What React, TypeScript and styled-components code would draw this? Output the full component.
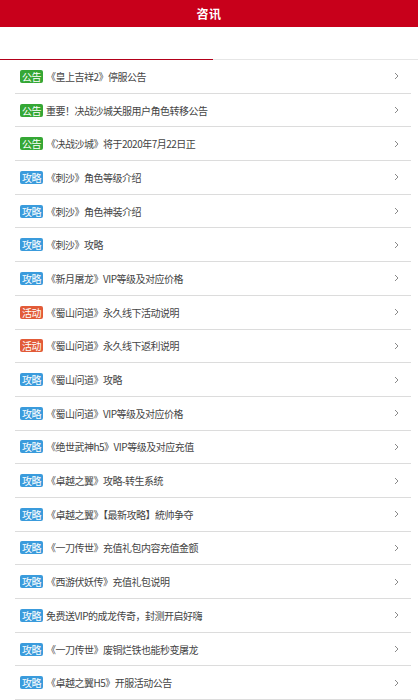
import React from 'react';
import styled, { createGlobalStyle } from 'styled-components';

const GlobalStyle = createGlobalStyle`
  html, body {
    margin: 0;
    padding: 0;
    background: #fff;
  }
  body {
    font-family: "Noto Sans CJK SC", "Liberation Sans", sans-serif;
  }
`;

type Kind = 'notice' | 'guide' | 'event';

const badgeColors: Record<Kind, string> = {
  notice: '#35a735',
  guide: '#3a9bdc',
  event: '#e25b38',
};

const badgeText: Record<Kind, string> = {
  notice: '公告',
  guide: '攻略',
  event: '活动',
};

const news: { kind: Kind; title: string }[] = [
  { kind: 'notice', title: '《皇上吉祥2》停服公告' },
  { kind: 'notice', title: '重要！决战沙城关服用户角色转移公告' },
  { kind: 'notice', title: '《决战沙城》将于2020年7月22日正' },
  { kind: 'guide', title: '《刺沙》角色等级介绍' },
  { kind: 'guide', title: '《刺沙》角色神装介绍' },
  { kind: 'guide', title: '《刺沙》攻略' },
  { kind: 'guide', title: '《新月屠龙》VIP等级及对应价格' },
  { kind: 'event', title: '《蜀山问道》永久线下活动说明' },
  { kind: 'event', title: '《蜀山问道》永久线下返利说明' },
  { kind: 'guide', title: '《蜀山问道》攻略' },
  { kind: 'guide', title: '《蜀山问道》VIP等级及对应价格' },
  { kind: 'guide', title: '《绝世武神h5》VIP等级及对应充值' },
  { kind: 'guide', title: '《卓越之翼》攻略-转生系统' },
  { kind: 'guide', title: '《卓越之翼》【最新攻略】統帅争夺' },
  { kind: 'guide', title: '《一刀传世》充值礼包内容充值金额' },
  { kind: 'guide', title: '《西游伏妖传》充值礼包说明' },
  { kind: 'guide', title: '免费送VIP的成龙传奇，封测开启好嗨' },
  { kind: 'guide', title: '《一刀传世》废铜烂铁也能秒变屠龙' },
  { kind: 'guide', title: '《卓越之翼H5》开服活动公告' },
];

const Page = styled.div`
  width: 418px;
  min-height: 700px;
  background: #fff;
`;

const Header = styled.header`
  height: 27px;
  background: #c8001b;
  color: #fff;
  display: flex;
  align-items: center;
  justify-content: center;
  font-size: 12px;
  font-weight: bold;
  letter-spacing: 0.5px;
`;

const Tabs = styled.nav`
  height: 32px;
  display: flex;
  border-bottom: 1px solid #e6e6e6;
`;

const Tab = styled.div<{ $active?: boolean }>`
  flex: ${p => (p.$active ? '0 0 213px' : '1 1 auto')};
  margin-bottom: -1px;
  border-bottom: 1px solid ${p => (p.$active ? '#b3001a' : 'transparent')};
`;

const List = styled.ul`
  list-style: none;
  margin: 0;
  padding: 0 7px 0 15px;
`;

const Row = styled.li`
  height: 33.7px;
  box-sizing: border-box;
  display: flex;
  align-items: center;
  padding: 0 12px 0 5px;
  border-bottom: 1px solid #dcdcdc;
`;

const Badge = styled.span<{ $kind: Kind }>`
  flex: none;
  width: 23px;
  height: 13px;
  line-height: 13px;
  border-radius: 2px;
  background: ${p => badgeColors[p.$kind]};
  color: #fff;
  font-size: 10px;
  letter-spacing: -0.5px;
  text-align: center;
  margin-right: 3px;
`;

const Title = styled.span`
  flex: 1;
  font-size: 10px;
  letter-spacing: -0.5px;
  color: #444;
  white-space: nowrap;
  overflow: hidden;
`;

const Chevron = () => (
  <svg width="5" height="8" viewBox="0 0 5 8" fill="none">
    <path d="M1 1l3 3-3 3" stroke="#8a8a8a" strokeWidth="1" />
  </svg>
);

export default function App() {
  return (
    <Page>
      <GlobalStyle />
      <Header>咨讯</Header>
      <Tabs>
        <Tab $active />
        <Tab />
      </Tabs>
      <List>
        {news.map((n, i) => (
          <Row key={i}>
            <Badge $kind={n.kind}>{badgeText[n.kind]}</Badge>
            <Title>{n.title}</Title>
            <Chevron />
          </Row>
        ))}
      </List>
    </Page>
  );
}
